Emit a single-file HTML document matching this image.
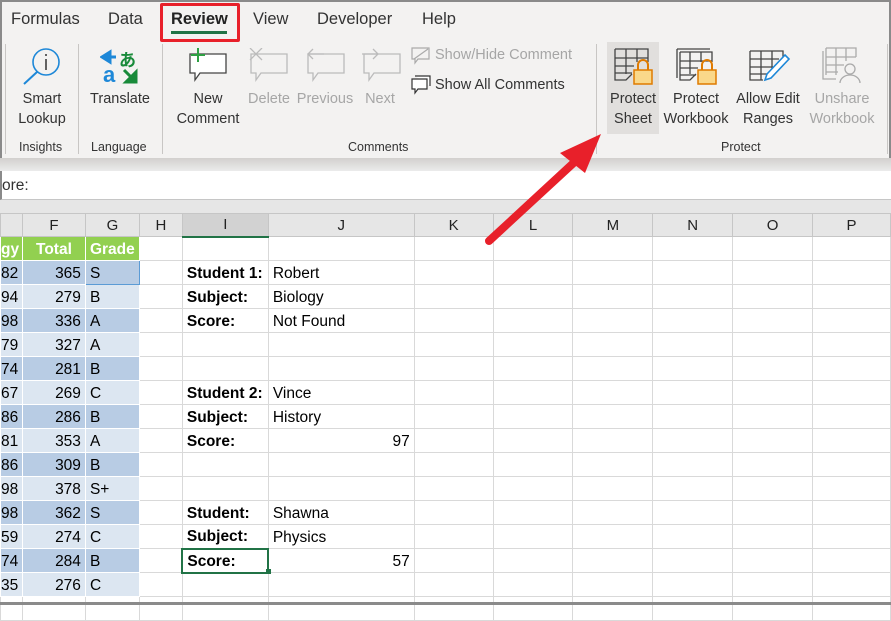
<!DOCTYPE html>
<html><head><style>
*{margin:0;padding:0;box-sizing:border-box}
body{width:891px;height:605px;overflow:hidden;background:#fff;font-family:"Liberation Sans",sans-serif;position:relative}
.a{position:absolute}
.tab{position:absolute;top:10px;font-size:16.5px;color:#333}
.lbl{position:absolute;font-size:14.5px;color:#333;text-align:center;line-height:20px}
.dis{color:#a6a6a6}
.grp{position:absolute;top:140px;font-size:12.5px;color:#333}
.sep{position:absolute;top:44px;width:1px;height:110px;background:#c8c6c4}
table{position:absolute;left:0;top:213px;border-collapse:collapse;table-layout:fixed;font-family:"Liberation Sans",sans-serif;font-size:15.5px}
td{height:24px;border:1px solid #d9d9d9;padding:2px 4px 0 4px;white-space:nowrap;overflow:hidden;color:#000}
tr.h td{height:23px;background:#e6e6e6;border-color:#c6c6c6;text-align:center;color:#222;font-size:15px;padding-top:0}
.g{background:#92d050;color:#fff;font-weight:bold;border-color:#fff}
.d{background:#b8cce4;border-color:#fff}
.l{background:#dce6f1;border-color:#fff}
.r{text-align:right}
.c{text-align:center}
.b{font-weight:bold}
</style></head><body>
<div class="a" style="left:0;top:0;width:891px;height:158px;background:#f3f2f1;border-left:2px solid #8a8a8a;border-top:2px solid #8a8a8a;border-right:2px solid #8a8a8a"></div>
<div class="tab" style="left:11px">Formulas</div>
<div class="tab" style="left:108px">Data</div>
<div class="tab" style="left:171px;font-weight:bold;color:#222">Review</div>
<div class="a" style="left:171px;top:31px;width:56px;height:3px;background:#217346"></div>
<div class="a" style="left:160px;top:3px;width:80px;height:39px;border:3px solid #e8202a;border-radius:2px"></div>
<div class="tab" style="left:253px">View</div>
<div class="tab" style="left:317px">Developer</div>
<div class="tab" style="left:422px">Help</div>

<div class="sep" style="left:5px"></div><div class="sep" style="left:78px"></div><div class="sep" style="left:162px"></div><div class="sep" style="left:596px"></div><div class="sep" style="left:887px"></div>

<svg class="a" style="left:20px;top:46px" width="45" height="42"><circle cx="26" cy="16" r="13" fill="none" stroke="#1e88d8" stroke-width="1.6"/><line x1="17" y1="26" x2="4" y2="38" stroke="#1e88d8" stroke-width="2"/><line x1="26" y1="13" x2="26" y2="24" stroke="#333" stroke-width="1.5"/><circle cx="26" cy="9" r="1" fill="#333"/></svg>
<svg class="a" style="left:100px;top:48px" width="40" height="38"><path d="M10 4 L2 9 L10 14 Z M8 9 H16" fill="#1e88d8" stroke="#1e88d8" stroke-width="3"/><text x="3" y="34" font-size="22" font-family="Liberation Sans" fill="#1e88d8" font-weight="bold">a</text><text x="19" y="18" font-size="17" font-family="Noto Sans CJK JP" fill="#188a3a" font-weight="bold">あ</text><path d="M36 34 L26 34 L36 24 Z M24 22 L32 30" fill="#188a3a" stroke="#188a3a" stroke-width="3"/></svg>
<svg class="a" style="left:186px;top:48px" width="44" height="36"><path d="M4 6 H40 V25 H14 L9 32 V25 H4 Z" fill="#fff" stroke="#444" stroke-width="1.3"/><path d="M12 0 V14 M5 7 H19" stroke="#2ea043" stroke-width="2"/></svg>
<svg class="a" style="left:247px;top:48px" width="44" height="36"><path d="M4 6 H40 V25 H14 L9 32 V25 H4 Z" fill="#f3f2f1" stroke="#bbb" stroke-width="1.3"/><path d="M3 0 L15 12 M15 0 L3 12" stroke="#bbb" stroke-width="1.3"/></svg>
<svg class="a" style="left:304px;top:48px" width="44" height="36"><path d="M4 6 H40 V25 H14 L9 32 V25 H4 Z" fill="#f3f2f1" stroke="#bbb" stroke-width="1.3"/><path d="M20 6 H4 M9 1 L4 6 L9 11" stroke="#bbb" fill="none" stroke-width="1.3"/></svg>
<svg class="a" style="left:360px;top:48px" width="44" height="36"><path d="M4 6 H40 V25 H14 L9 32 V25 H4 Z" fill="#f3f2f1" stroke="#bbb" stroke-width="1.3"/><path d="M2 6 H18 M13 1 L18 6 L13 11" stroke="#bbb" fill="none" stroke-width="1.3"/></svg>
<svg class="a" style="left:411px;top:47px" width="20" height="18"><path d="M1 1 H18 V12 H7 L4 16 V12 H1 Z M3 12 L17 2" fill="none" stroke="#aaa" stroke-width="1.2"/></svg>
<svg class="a" style="left:411px;top:75px" width="20" height="20"><path d="M4 1 H19 V11 M1 4 H16 V14 H7 L4 18 V14 H1 Z" fill="#fff" stroke="#333" stroke-width="1.2"/></svg>
<div class="a" style="left:435px;top:47px;font-size:14.5px;color:#a6a6a6">Show/Hide Comment</div>
<div class="a" style="left:435px;top:77px;font-size:14.5px;color:#333">Show All Comments</div>

<div class="a" style="left:607px;top:42px;width:52px;height:92px;background:#e1dfdd"></div>
<svg class="a" style="left:614px;top:48px" width="40" height="38"><path d="M1 1 H34 V14 M1 1 V32 H12 L18 26 V26 M1 10 H34 M1 18 H20 M1 25 H18 M12 1 V26 M23 1 V14" fill="none" stroke="#444" stroke-width="1.3"/><path d="M24 22 V17 a5 5 0 0 1 10 0 V22" fill="none" stroke="#e07b00" stroke-width="2"/><rect x="20" y="22" width="18" height="14" fill="#fad88a" stroke="#e07b00" stroke-width="1.5"/></svg>
<svg class="a" style="left:676px;top:48px" width="42" height="38"><path d="M1 1 H34 M1 1 V30 M4 4 H36 V14 M4 4 V32 H14 L20 26 M4 13 H36 M4 20 H22 M4 27 H20 M14 4 V26 M25 4 V14" fill="none" stroke="#444" stroke-width="1.3"/><path d="M26 22 V17 a5 5 0 0 1 10 0 V22" fill="none" stroke="#e07b00" stroke-width="2"/><rect x="22" y="22" width="18" height="14" fill="#fad88a" stroke="#e07b00" stroke-width="1.5"/></svg>
<svg class="a" style="left:749px;top:50px" width="42" height="36"><path d="M1 1 H34 V10 M1 1 V30 H14 M1 9 H30 M1 17 H24 M1 24 H18 M12 1 V30 M23 1 V20" fill="none" stroke="#444" stroke-width="1.3"/><path d="M36 5 L40 9 L22 28 L16 30 L18 24 Z" fill="#fff" stroke="#1e88d8" stroke-width="1.6"/></svg>
<svg class="a" style="left:822px;top:47px" width="42" height="38"><path d="M4 1 H34 V10 M1 4 V32 H14 M4 1 V28 M4 10 H34 M4 18 H22 M4 25 H16 M14 1 V28 M24 1 V14" fill="none" stroke="#aaa" stroke-width="1.3"/><circle cx="28" cy="22" r="5" fill="#f3f2f1" stroke="#aaa" stroke-width="1.3"/><path d="M18 36 a10 8 0 0 1 20 0" fill="none" stroke="#aaa" stroke-width="1.3"/></svg>

<div class="lbl" style="left:10px;top:89px;width:64px">Smart<br>Lookup</div>
<div class="lbl" style="left:84px;top:89px;width:72px">Translate</div>
<div class="lbl" style="left:170px;top:89px;width:76px">New<br>Comment</div>
<div class="lbl dis" style="left:244px;top:89px;width:50px">Delete</div>
<div class="lbl dis" style="left:295px;top:89px;width:60px">Previous</div>
<div class="lbl dis" style="left:360px;top:89px;width:40px">Next</div>
<div class="lbl" style="left:605px;top:89px;width:56px">Protect<br>Sheet</div>
<div class="lbl" style="left:659px;top:89px;width:74px">Protect<br>Workbook</div>
<div class="lbl" style="left:731px;top:89px;width:74px">Allow Edit<br>Ranges</div>
<div class="lbl dis" style="left:805px;top:89px;width:74px">Unshare<br>Workbook</div>
<div class="grp" style="left:19px">Insights</div>
<div class="grp" style="left:91px">Language</div>
<div class="grp" style="left:348px">Comments</div>
<div class="grp" style="left:721px">Protect</div>

<div class="a" style="left:0;top:158px;width:891px;height:13px;background:linear-gradient(#d2d0ce,#ebebeb)"></div>
<div class="a" style="left:0;top:171px;width:891px;height:29px;background:#fff;border-bottom:1px solid #c6c6c6;border-left:2px solid #8a8a8a;font-size:15.5px;color:#333;padding:6px 0 0 0">ore:</div>
<div class="a" style="left:0;top:200px;width:891px;height:13px;background:#e6e6e6"></div>

<table>
<colgroup><col style="width:22px"><col style="width:63px"><col style="width:54px"><col style="width:43px"><col style="width:86px"><col style="width:146px"><col style="width:79px"><col style="width:80px"><col style="width:80px"><col style="width:80px"><col style="width:80px"><col style="width:78px"></colgroup>
<tr class="h"><td></td><td>F</td><td>G</td><td>H</td><td style="background:#d2d2d2;border-bottom:2px solid #217346">I</td><td>J</td><td>K</td><td>L</td><td>M</td><td>N</td><td>O</td><td>P</td></tr>
<tr><td class="g" style="padding:2px 0 0 0">gy</td><td class="g c">Total</td><td class="g">Grade</td><td></td><td></td><td></td><td></td><td></td><td></td><td></td><td></td><td></td></tr>
<tr><td class="d" style="padding:2px 0 0 0">82</td><td class="d r">365</td><td class="d" style="border:1px solid #5b9bd5">S</td><td></td><td class="b">Student 1:</td><td>Robert</td><td></td><td></td><td></td><td></td><td></td><td></td></tr>
<tr><td class="l" style="padding:2px 0 0 0">94</td><td class="l r">279</td><td class="l">B</td><td></td><td class="b">Subject:</td><td>Biology</td><td></td><td></td><td></td><td></td><td></td><td></td></tr>
<tr><td class="d" style="padding:2px 0 0 0">98</td><td class="d r">336</td><td class="d">A</td><td></td><td class="b">Score:</td><td>Not Found</td><td></td><td></td><td></td><td></td><td></td><td></td></tr>
<tr><td class="l" style="padding:2px 0 0 0">79</td><td class="l r">327</td><td class="l">A</td><td></td><td></td><td></td><td></td><td></td><td></td><td></td><td></td><td></td></tr>
<tr><td class="d" style="padding:2px 0 0 0">74</td><td class="d r">281</td><td class="d">B</td><td></td><td></td><td></td><td></td><td></td><td></td><td></td><td></td><td></td></tr>
<tr><td class="l" style="padding:2px 0 0 0">67</td><td class="l r">269</td><td class="l">C</td><td></td><td class="b">Student 2:</td><td>Vince</td><td></td><td></td><td></td><td></td><td></td><td></td></tr>
<tr><td class="d" style="padding:2px 0 0 0">86</td><td class="d r">286</td><td class="d">B</td><td></td><td class="b">Subject:</td><td>History</td><td></td><td></td><td></td><td></td><td></td><td></td></tr>
<tr><td class="l" style="padding:2px 0 0 0">81</td><td class="l r">353</td><td class="l">A</td><td></td><td class="b">Score:</td><td class="r">97</td><td></td><td></td><td></td><td></td><td></td><td></td></tr>
<tr><td class="d" style="padding:2px 0 0 0">86</td><td class="d r">309</td><td class="d">B</td><td></td><td></td><td></td><td></td><td></td><td></td><td></td><td></td><td></td></tr>
<tr><td class="l" style="padding:2px 0 0 0">98</td><td class="l r">378</td><td class="l">S+</td><td></td><td></td><td></td><td></td><td></td><td></td><td></td><td></td><td></td></tr>
<tr><td class="d" style="padding:2px 0 0 0">98</td><td class="d r">362</td><td class="d">S</td><td></td><td class="b">Student:</td><td>Shawna</td><td></td><td></td><td></td><td></td><td></td><td></td></tr>
<tr><td class="l" style="padding:2px 0 0 0">59</td><td class="l r">274</td><td class="l">C</td><td></td><td class="b">Subject:</td><td>Physics</td><td></td><td></td><td></td><td></td><td></td><td></td></tr>
<tr><td class="d" style="padding:2px 0 0 0">74</td><td class="d r">284</td><td class="d">B</td><td></td><td class="b" style="border:2px solid #217346">Score:</td><td class="r">57</td><td></td><td></td><td></td><td></td><td></td><td></td></tr>
<tr><td class="l" style="padding:2px 0 0 0">35</td><td class="l r">276</td><td class="l">C</td><td></td><td></td><td></td><td></td><td></td><td></td><td></td><td></td><td></td></tr>
<tr><td style="height:8px"></td><td></td><td></td><td></td><td></td><td></td><td></td><td></td><td></td><td></td><td></td><td></td></tr>
</table>
<div class="a" style="left:266px;top:569px;width:5px;height:5px;background:#217346"></div>
<div class="a" style="left:0;top:602px;width:891px;height:3px;background:#8a8a8a"></div>

<svg class="a" style="left:0;top:0" width="891" height="605"><line x1="489" y1="241" x2="580" y2="157" stroke="#e8202a" stroke-width="8" stroke-linecap="round"/><path d="M560 153 L601 134 L585 173 Z" fill="#e8202a"/></svg>
</body></html>
